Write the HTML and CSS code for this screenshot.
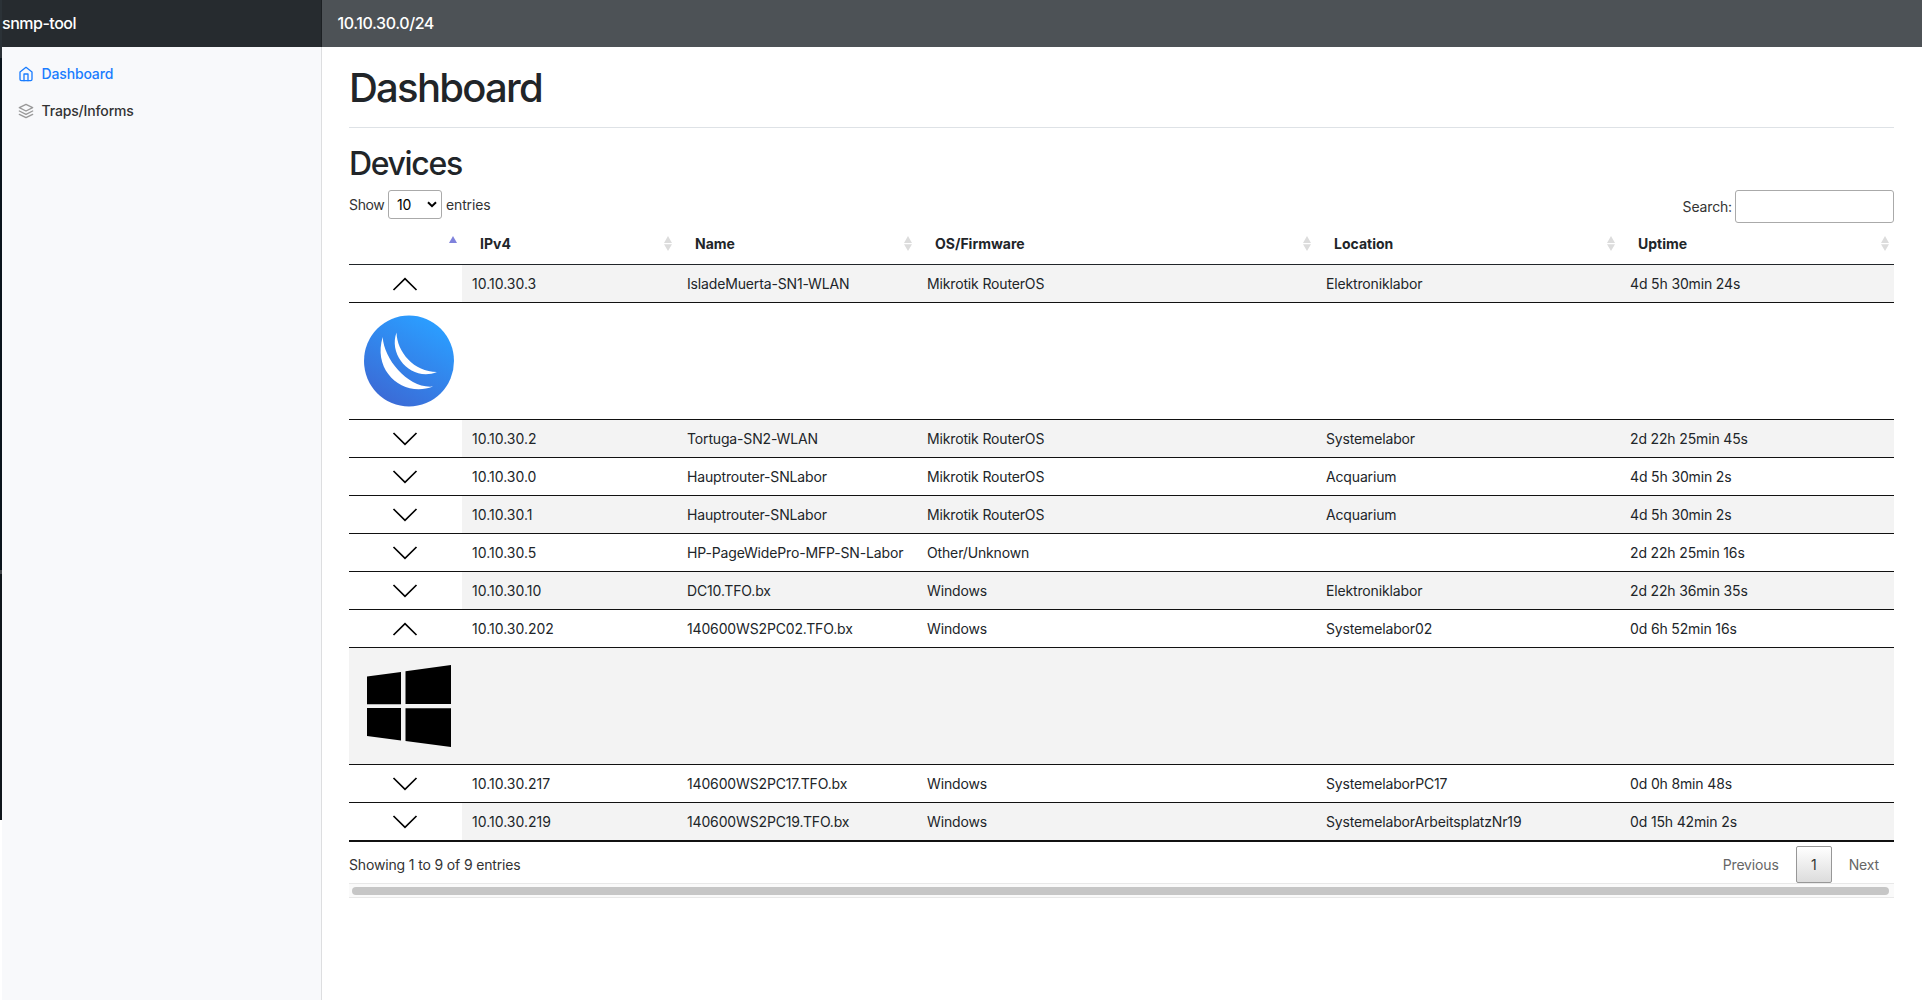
FILE: index.html
```html
<!DOCTYPE html>
<html lang="en">
<head>
<meta charset="utf-8">
<title>snmp-tool</title>
<link rel="stylesheet" href="styles.css">
</head>
<body>
<svg class="defs" width="0" height="0">
  <symbol id="down" viewBox="0 0 26 14"><path d="M1.5 1 13 12.4 24.5 1" fill="none" stroke="#000" stroke-width="1.7"/></symbol>
  <symbol id="up" viewBox="0 0 26 14"><path d="M1.5 13 13 1.6 24.5 13" fill="none" stroke="#000" stroke-width="1.7"/></symbol>
  <symbol id="sort" viewBox="0 0 8 15"><path d="M4 0 8 7H0zM0 8.2h8L4 15z" fill="#dcdcdc"/></symbol>
</svg>
<div class="edge"></div>
<div class="app">
  <header class="topbar">
    <div class="brand">snmp-tool</div>
    <div class="network">10.10.30.0/24</div>
  </header>
  <div class="body">
    <nav class="sidebar">
      <a class="nav-link active"><svg width="16" height="16" viewBox="0 0 24 24"><path d="M3 9l9-7 9 7v11a2 2 0 0 1-2 2H5a2 2 0 0 1-2-2z"/><path d="M9 22V12h6v10"/></svg><span>Dashboard</span></a>
      <a class="nav-link"><svg width="16" height="16" viewBox="0 0 24 24"><path d="M12 2 2 7l10 5 10-5z"/><path d="M2 17l10 5 10-5M2 12l10 5 10-5"/></svg><span>Traps/Informs</span></a>
    </nav>
    <main class="main">
      <h1>Dashboard</h1>
      <h2>Devices</h2>
      <div class="controls">
        <label class="length"><span>Show</span><span class="select">10<svg width="10" height="7" viewBox="0 0 10 7"><path d="M1 1.2 5 5.2 9 1.2" fill="none" stroke="#000" stroke-width="2"/></svg></span><span>entries</span></label>
        <label class="search"><span>Search:</span><input type="text"></label>
      </div>
      <table class="devices">
        <colgroup><col class="c1"><col class="c2"><col class="c3"><col class="c4"><col class="c5"><col class="c6"></colgroup>
        <thead><tr>
          <th><svg class="sort" width="8" height="15" viewBox="0 0 8 15"><path d="M4 0 8 7H0z" fill="#7f82dc"/></svg></th>
          <th>IPv4<svg class="sort" width="8" height="15"><use href="#sort"/></svg></th>
          <th>Name<svg class="sort" width="8" height="15"><use href="#sort"/></svg></th>
          <th>OS/Firmware<svg class="sort" width="8" height="15"><use href="#sort"/></svg></th>
          <th>Location<svg class="sort" width="8" height="15"><use href="#sort"/></svg></th>
          <th>Uptime<svg class="sort" width="8" height="15"><use href="#sort"/></svg></th>
        </tr></thead>
        <tbody>
          <tr class="odd"><td><svg width="26" height="14"><use href="#up"/></svg></td><td>10.10.30.3</td><td>IsladeMuerta-SN1-WLAN</td><td>Mikrotik RouterOS</td><td>Elektroniklabor</td><td>4d 5h 30min 24s</td></tr>
          <tr class="detail"><td colspan="6"><svg width="90" height="92" viewBox="0 0 90 92"><defs><linearGradient id="mk" x1=".25" y1=".95" x2=".75" y2=".08"><stop offset="0" stop-color="#3b6bd6"/><stop offset="1" stop-color="#2b9dff"/></linearGradient></defs><ellipse cx="45" cy="46" rx="45" ry="45.5" fill="url(#mk)"/><path d="M18.700 22C20 45 45 74 69 71.500C40 83 8 57 18.700 22zM32.500 17.500C33 37 50 57 73 57C48 67 24 41 32.500 17.500z" fill="#fff"/></svg></td></tr>
          <tr class="odd"><td><svg width="26" height="14"><use href="#down"/></svg></td><td>10.10.30.2</td><td>Tortuga-SN2-WLAN</td><td>Mikrotik RouterOS</td><td>Systemelabor</td><td>2d 22h 25min 45s</td></tr>
          <tr><td><svg width="26" height="14"><use href="#down"/></svg></td><td>10.10.30.0</td><td>Hauptrouter-SNLabor</td><td>Mikrotik RouterOS</td><td>Acquarium</td><td>4d 5h 30min 2s</td></tr>
          <tr class="odd"><td><svg width="26" height="14"><use href="#down"/></svg></td><td>10.10.30.1</td><td>Hauptrouter-SNLabor</td><td>Mikrotik RouterOS</td><td>Acquarium</td><td>4d 5h 30min 2s</td></tr>
          <tr><td><svg width="26" height="14"><use href="#down"/></svg></td><td>10.10.30.5</td><td>HP-PageWidePro-MFP-SN-Labor</td><td>Other/Unknown</td><td></td><td>2d 22h 25min 16s</td></tr>
          <tr class="odd"><td><svg width="26" height="14"><use href="#down"/></svg></td><td>10.10.30.10</td><td>DC10.TFO.bx</td><td>Windows</td><td>Elektroniklabor</td><td>2d 22h 36min 35s</td></tr>
          <tr><td><svg width="26" height="14"><use href="#up"/></svg></td><td>10.10.30.202</td><td>140600WS2PC02.TFO.bx</td><td>Windows</td><td>Systemelabor02</td><td>0d 6h 52min 16s</td></tr>
          <tr class="detail shaded"><td colspan="6"><svg width="90" height="92" viewBox="0 0 90 92"><path d="M3 16.500 37 12V44.300H3zM41.500 11.200 87 5V44H41.500zM3 48H37V80.500L3 76zM41.500 48.200H87V87L41.500 81z"/></svg></td></tr>
          <tr><td><svg width="26" height="14"><use href="#down"/></svg></td><td>10.10.30.217</td><td>140600WS2PC17.TFO.bx</td><td>Windows</td><td>SystemelaborPC17</td><td>0d 0h 8min 48s</td></tr>
          <tr class="odd"><td><svg width="26" height="14"><use href="#down"/></svg></td><td>10.10.30.219</td><td>140600WS2PC19.TFO.bx</td><td>Windows</td><td>SystemelaborArbeitsplatzNr19</td><td>0d 15h 42min 2s</td></tr>
        </tbody>
      </table>
      <div class="footer">
        <span class="info">Showing 1 to 9 of 9 entries</span>
        <div class="pages"><span>Previous</span><span class="page">1</span><span class="next">Next</span></div>
      </div>
      <div class="scrollbar"><div class="thumb"></div></div>
    </main>
  </div>
</div>
</body>
</html>
```
FILE: styles.css
```css
* { box-sizing: border-box; }
body {
  margin: 0;
  display: flex;
  height: 1000px;
  overflow: hidden;
  background: #fff;
  color: #212529;
  font: 14px/21px Inter, "Liberation Sans", sans-serif;
  letter-spacing: -.15px;
}
.defs { position: absolute; }
.edge {
  width: 2px;
  height: 820px;
  background: linear-gradient(#2b3237 0 58px, #0a141c 58px 570px, #41464a 570px 574px, #10161b 574px);
}
.app { flex: 1; display: flex; flex-direction: column; }
.topbar { display: flex; height: 47px; background: #4d5256; color: #fff; font-size: 16px; line-height: 47px; font-weight: 500; letter-spacing: -.4px; }
.brand { width: 320px; background: #262b2f; border-right: 1px solid #1c2023; letter-spacing: -.48px; }
.network { padding-left: 15.5px; }
.body { flex: 1; display: flex; }
.sidebar { width: 320px; background: #f8f9fb; border-right: 1px solid #dddee0; padding: 8px 0 0 16px; }
.nav-link { display: flex; align-items: center; gap: 7.5px; height: 37px; font-weight: 500; color: #333; }
.nav-link svg { fill: none; stroke: #999; stroke-width: 2; stroke-linecap: round; stroke-linejoin: round; }
.active { color: #1a7dff; }
.active svg { stroke: #1a7dff; }
.main { flex: 1; padding: 17px 28px 0 27px; }
h1 { margin: 0; height: 64px; border-bottom: 1px solid #dee2e6; font-size: 40px; line-height: 48px; font-weight: 500; letter-spacing: -1.75px; }
h2 { margin: 0; padding-top: 17px; height: 62px; font-size: 32px; line-height: 38px; font-weight: 500; letter-spacing: -1.35px; }
.controls { display: flex; justify-content: space-between; align-items: flex-start; height: 35px; color: #333; }
.length { display: flex; align-items: center; gap: 4px; }
.length > span:first-child { width: 35px; letter-spacing: -.35px; }
.select { display: flex; align-items: center; justify-content: space-between; width: 54px; height: 29px; padding: 0 4px 0 8px; border: 1px solid #aaa; border-radius: 3px; color: #000; }
.search { display: flex; align-items: center; gap: 3px; }
.search input { width: 159px; height: 33px; border: 1px solid #aaa; border-radius: 3px; background: #fff; }
.devices { width: 1545px; table-layout: fixed; border-collapse: separate; border-spacing: 0; border-bottom: 2px solid #111; }
.c1 { width: 113px; } .c2 { width: 215px; } .c3 { width: 240px; } .c4 { width: 399px; } .c5 { width: 304px; } .c6 { width: 274px; }
th { position: relative; height: 40px; padding: 0 18px 2px; border-bottom: 1px solid #212529; text-align: left; font-weight: 700; letter-spacing: 0; }
.sort { position: absolute; right: 5.5px; top: 11px; }
td { height: 38px; padding: 0 10px; border-top: 1px solid #111; white-space: nowrap; }
td:first-child { padding: 0 11px 0 10px; }
td:nth-child(2) { letter-spacing: 0; }
td svg { display: block; margin: 0 auto; }
tbody tr:first-child td { height: 37px; border-top: 0; }
.odd td:not(:first-child), .shaded td { background: #f3f3f3; }
.detail td:first-child { height: 117px; padding: 0 15px; }
.detail svg { margin: 0; }
.footer { display: flex; justify-content: space-between; height: 41px; padding-top: 4px; color: #333; }
.info { line-height: 38px; }
.pages { display: flex; align-items: center; height: 37px; color: #666; }
.page { width: 36px; height: 37px; line-height: 35px; margin: 0 17px; border: 1px solid #979797; border-radius: 2px; background: linear-gradient(#fff, #dcdcdc); color: #333; text-align: center; }
.next { margin-right: 15px; }
.scrollbar { height: 15px; padding: 3px 5px 3px 3px; border: solid #e8e8e8; border-width: 1px 0; background: #fafafa; }
.thumb { height: 8px; border-radius: 4px; background: #c6c6c6; }
```
